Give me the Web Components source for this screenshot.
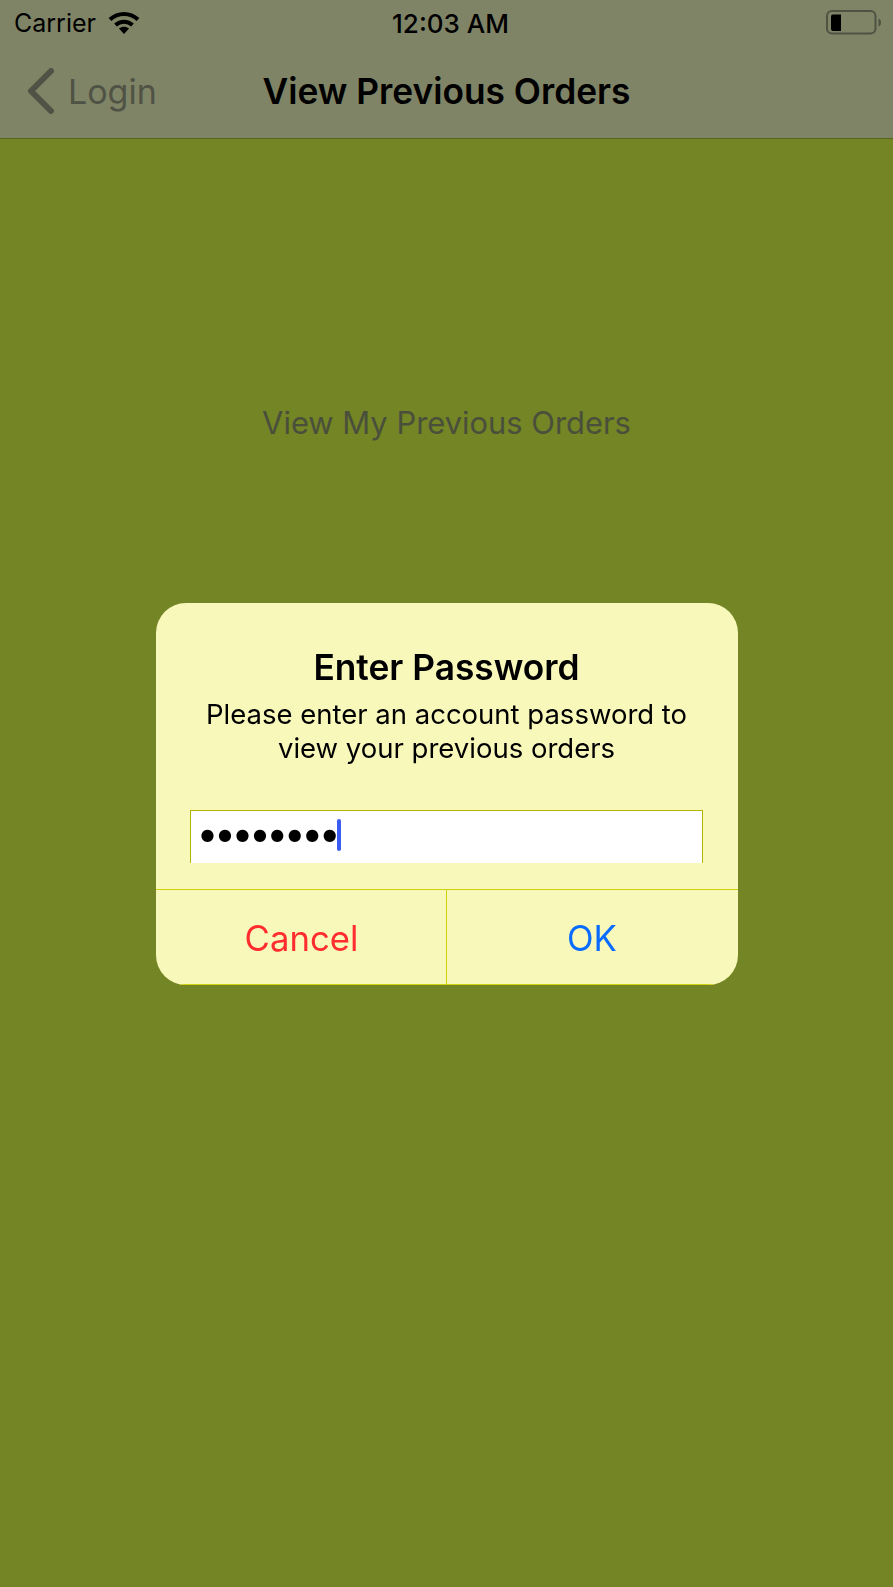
<!DOCTYPE html>
<html>
<head>
<meta charset="utf-8">
<title>View Previous Orders</title>
<style>
    html, body { margin: 0; height: 100%; }
    body { background: #738524; font-family: Inter, "Liberation Sans", sans-serif; }
</style>
</head>
<body>
<order-screen>
    <status-bar slot="top"></status-bar>
    <nav-bar slot="top" back="Login">View Previous Orders</nav-bar>
    View My Previous Orders
</order-screen>
<password-alert heading="Enter Password">
    Please enter an account password to<br>view your previous orders
</password-alert>

<script>
class OrderScreen extends HTMLElement {
    constructor() {
        super();
        this.attachShadow({mode: 'open'});
        this.shadowRoot.innerHTML = `
            <style>
                :host {
                    display: flex;
                    flex-direction: column;
                    height: 1587px;
                    background: #738524;
                }
                header {
                    background: #7f8466;
                    border-bottom: 1px solid #56641c;
                }
                main {
                    padding-top: 264px;
                    text-align: center;
                    font-size: 30.9px;
                    line-height: 40px;
                    color: #4a4f3c;
                }
            </style>
            <header><slot name="top"></slot></header>
            <main><slot></slot></main>
            `
    }
}

class StatusBar extends HTMLElement {
    constructor() {
        super();
        this.attachShadow({mode: 'open'});
        this.shadowRoot.innerHTML = `
            <style>
                :host {
                    display: grid;
                    grid-template-columns: 1fr auto 1fr;
                    align-items: center;
                    height: 46px;
                    padding: 0 11px 0 14px;
                    font-size: 25px;
                    color: #000;
                }
                #left { display: flex; align-items: center; gap: 12px; }
                #time { font-size: 26px; font-weight: 500; margin-left: 5px; }
                #right { display: flex; justify-content: flex-end; }
                svg { display: block; }
            </style>
            <div id="left">
                <span>Carrier</span>
                <svg width="32" height="24" viewBox="0 0 32 24">
                    <path d="M2 8.500C10 1 22 1 30 8.500" fill="none" stroke="#000" stroke-width="4"/>
                    <path d="M7.500 14C12.500 9.500 19.500 9.500 24.500 14" fill="none" stroke="#000" stroke-width="4"/>
                    <path d="M11 17.500C14 15 18 15 21 17.500L16 23Z" fill="#000"/>
                </svg>
            </div>
            <span id="time">12:03 AM</span>
            <div id="right">
                <svg width="56" height="26" viewBox="0 0 56 26">
                    <rect x="1" y="1" width="48.500" height="22.500" rx="5" fill="none" stroke="#4f5342" stroke-width="2"/>
                    <path d="M5 6.500a2 2 0 0 1 2-2H15V21H7a2 2 0 0 1-2-2Z" fill="#000"/>
                    <path d="M52.500 8.500C54.500 9.500 55 10.500 55 12.500S54.500 15.500 52.500 16.500Z" fill="#4f5342"/>
                </svg>
            </div>
            `
    }
}

class NavBar extends HTMLElement {
    constructor() {
        super();
        this.attachShadow({mode: 'open'});
        this.shadowRoot.innerHTML = `
            <style>
                :host {
                    display: grid;
                    grid-template-columns: 1fr auto 1fr;
                    align-items: center;
                    box-sizing: border-box;
                    height: 92px;
                    padding-bottom: 2px;
                }
                #back {
                    display: flex;
                    align-items: center;
                    gap: 14px;
                    padding-left: 27px;
                    font-size: 34px;
                    color: #4f5244;
                }
                svg { display: block; }
                #title {
                    font-size: 35.300px;
                    font-weight: 600;
                    color: #000;
                }
            </style>
            <div id="back">
                <svg width="27" height="46" viewBox="0 0 27 46">
                    <path d="M24 3L4 23L24 43" fill="none" stroke="#4f5244" stroke-width="6" stroke-linecap="round" stroke-linejoin="round"/>
                </svg>
                <span id="label"></span>
            </div>
            <div id="title"><slot></slot></div>
            <div></div>
            `
    }

    connectedCallback() {
        this.shadowRoot.querySelector('#label').textContent = this.getAttribute('back');
    }
}

class PasswordAlert extends HTMLElement {
    constructor() {
        super();
        this.attachShadow({mode: 'open'});
        this.shadowRoot.innerHTML = `
            <style>
                :host {
                    position: fixed;
                    top: 0;
                    left: 0;
                    width: 100%;
                    height: 100vh;
                    display: flex;
                    align-items: center;
                    justify-content: center;
                }
                #modal {
                    width: 582px;
                    height: 382px;
                    box-sizing: border-box;
                    background: #f9f8bb;
                    border-radius: 30px;
                    display: flex;
                    flex-direction: column;
                    overflow: hidden;
                    color: #000;
                    text-align: center;
                }
                h1 {
                    margin: 44px 0 0;
                    font-size: 35.300px;
                    line-height: 42px;
                    font-weight: 600;
                }
                p {
                    margin: 8px 0 0;
                    font-size: 27.500px;
                    line-height: 34px;
                }
                #field {
                    margin: 45px 35px 0 34px;
                    height: 53px;
                    box-sizing: border-box;
                    background: #fff;
                    border: 1px solid #b5b500;
                    border-bottom: 0;
                    display: flex;
                    align-items: center;
                    padding-left: 10px;
                    text-align: left;
                }
                #dots {
                    font-family: "DejaVu Sans", sans-serif;
                    font-size: 16px;
                    letter-spacing: 3.500px;
                    line-height: 1;
                    margin-top: -3px;
                }
                #caret {
                    width: 4px;
                    height: 32px;
                    margin: -3px 0 0 -3px;
                    border-radius: 2px;
                    background: #3a5cf0;
                }
                #actions {
                    margin-top: 26px;
                    flex: 1;
                    display: grid;
                    grid-template-columns: 291px 1fr;
                    border-top: 1px solid #d0d010;
                    border-bottom: 1px solid #d0d010;
                    font-size: 34.700px;
                }
                #actions div {
                    display: flex;
                    align-items: center;
                    justify-content: center;
                    padding-top: 3px;
                }
                #cancel { color: #ff2d2d; border-right: 1px solid #d0d010; padding-left: 2px; }
                #ok { color: #0a6cff; }
            </style>
            <div id="modal">
                <h1 id="heading"></h1>
                <p><slot></slot></p>
                <div id="field"><span id="dots">●●●●●●●●</span><span id="caret"></span></div>
                <section id="actions">
                    <div id="cancel">Cancel</div>
                    <div id="ok">OK</div>
                </section>
            </div>
            `
    }

    connectedCallback() {
        this.shadowRoot.querySelector('#heading').textContent = this.getAttribute('heading');
    }
}

customElements.define('order-screen', OrderScreen);
customElements.define('status-bar', StatusBar);
customElements.define('nav-bar', NavBar);
customElements.define('password-alert', PasswordAlert);
</script>
</body>
</html>
